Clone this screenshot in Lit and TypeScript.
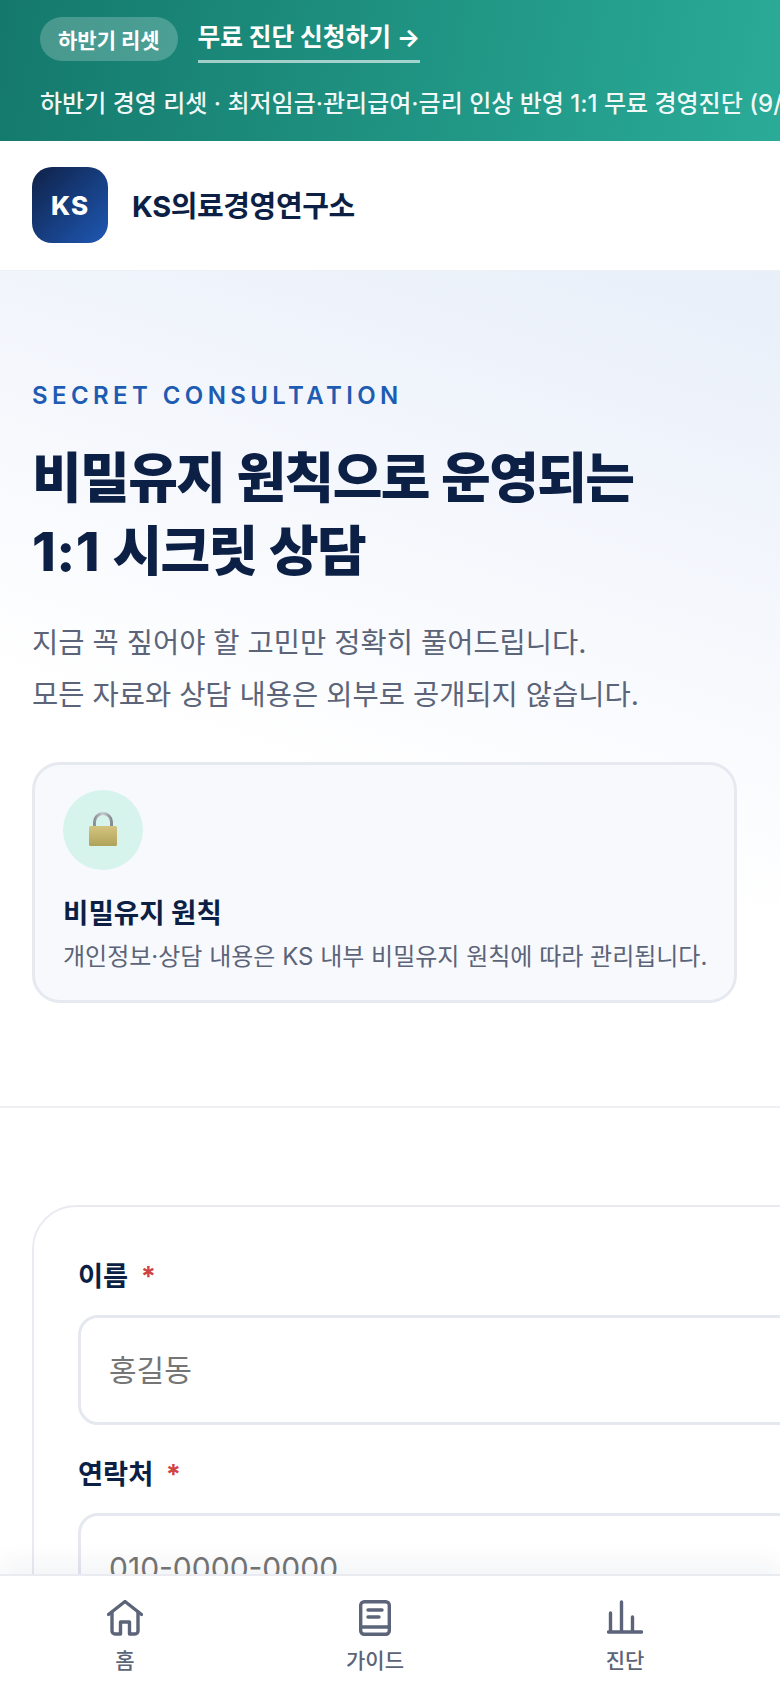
import { LitElement, html, css, svg } from 'lit';
import { customElement } from 'lit/decorators.js';

const navItems = [
  {
    label: '홈',
    icon: svg`<path d="M1.5 14.5 18 1.5l16.5 13" /><path d="M5 12v19a3 3 0 0 0 3 3h5.5V22h9v12H28a3 3 0 0 0 3-3V12" />`,
  },
  {
    label: '가이드',
    icon: svg`<rect x="3.7" y="1.7" width="28.6" height="32.6" rx="3.5" /><path d="M3.7 27h28.6M11 10h14M11 17h11" />`,
  },
  {
    label: '진단',
    icon: svg`<path d="M1.5 32h33M3.5 31V13M14.5 31V2M25.5 31V17" />`,
  },
];

@customElement('app-root')
export class AppRoot extends LitElement {
  static styles = css`
    :host {
      display: block;
      position: relative;
      width: 780px;
      height: 1688px;
      overflow: hidden;
      background: #fff;
      font-family: 'Inter', 'Noto Sans CJK KR', sans-serif;
      color: #0c1f45;
    }

    .promo {
      height: 141px;
      box-sizing: border-box;
      padding: 17px 0 0 40px;
      background: linear-gradient(100deg, #14796c 0%, #2aab98 100%);
      color: #fff;
      white-space: nowrap;
      overflow: hidden;
    }
    .promo__top {
      display: flex;
      align-items: flex-start;
      gap: 20px;
    }
    .promo__pill {
      height: 44px;
      padding: 0 18px;
      display: flex;
      align-items: center;
      border-radius: 22px;
      background: rgba(255, 255, 255, 0.22);
      font-size: 21px;
      font-weight: 700;
    }
    .promo__link {
      height: 43px;
      line-height: 40px;
      border-bottom: 3px solid rgba(255, 255, 255, 0.6);
      font-size: 24.7px;
      font-weight: 700;
    }
    .promo__text {
      margin-top: 24px;
      font-size: 24px;
      font-weight: 500;
      line-height: 34px;
      color: rgba(255, 255, 255, 0.94);
    }

    .brand {
      height: 129px;
      box-sizing: border-box;
      padding: 0 32px 1px;
      display: flex;
      align-items: center;
      gap: 24px;
      background: #fff;
    }
    .brand__logo {
      width: 76px;
      height: 76px;
      border-radius: 20px;
      display: flex;
      align-items: center;
      justify-content: center;
      background: linear-gradient(135deg, #0f2147 0%, #1e58b4 100%);
      color: #fff;
      font-size: 26px;
      font-weight: 800;
      letter-spacing: 1px;
    }
    .brand__name {
      padding-bottom: 3px;
      font-size: 29px;
      font-weight: 700;
      letter-spacing: -0.4px;
    }

    .hero {
      height: 838px;
      box-sizing: border-box;
      padding: 110px 32px 0;
      border-top: 1px solid #edf0f5;
      border-bottom: 2px solid #eef0f4;
      background: linear-gradient(198deg, #e8eff9 0%, #f3f6fc 28%, #fbfcfe 50%, #ffffff 60%);
    }
    .hero__eyebrow {
      font-size: 24px;
      line-height: 30px;
      font-weight: 600;
      letter-spacing: 4.4px;
      color: #1e5cb3;
    }
    .hero__title {
      margin: 31px 0 0;
      font-size: 54px;
      line-height: 73px;
      font-weight: 800;
      letter-spacing: -1.6px;
      word-spacing: 2px;
    }
    .hero__num {
      letter-spacing: 0.5px;
    }
    .hero__sub {
      margin: 29px 0 0;
      font-size: 28.5px;
      line-height: 52px;
      color: #5b6478;
    }
    .notice {
      width: 705px;
      height: 241px;
      margin-top: 41px;
      box-sizing: border-box;
      padding: 25px 28px;
      border: 3px solid #e6e9f0;
      border-radius: 28px;
      background: #f8f9fd;
    }
    .notice__icon {
      width: 80px;
      height: 80px;
      display: flex;
      align-items: center;
      justify-content: center;
      border-radius: 50%;
      background: #d6f3ec;
    }
    .notice__title {
      margin-top: 24px;
      font-size: 27.6px;
      line-height: 38px;
      font-weight: 700;
    }
    .notice__desc {
      margin-top: 7px;
      font-size: 24px;
      line-height: 36px;
      white-space: nowrap;
      color: #5b6478;
    }

    .form-wrap {
      padding: 97px 0 0 32px;
    }
    .form {
      width: 900px;
      height: 600px;
      box-sizing: border-box;
      padding: 50px 44px;
      border: 2px solid #e9ebf0;
      border-radius: 44px;
    }
    .field + .field {
      margin-top: 30px;
    }
    .field__label {
      display: block;
      font-size: 27.3px;
      line-height: 40px;
      font-weight: 700;
    }
    .field__req {
      margin-left: 6px;
      color: #d14343;
    }
    .field__input {
      display: block;
      width: 100%;
      height: 110px;
      margin-top: 18px;
      box-sizing: border-box;
      padding: 0 28px;
      border: 3px solid #e6e8ef;
      border-radius: 20px;
      outline: none;
      background: #fff;
      font: inherit;
      font-size: 30px;
    }
    .field__input::placeholder {
      color: #757575;
      opacity: 1;
    }

    .tabs {
      position: absolute;
      left: 0;
      bottom: 0;
      width: 780px;
      height: 112px;
      display: flex;
      border-top: 2px solid #e9ebf0;
      background: #fff;
      box-shadow: 0 -12px 24px rgba(15, 33, 71, 0.05);
    }
    .tab {
      flex: 0 0 250px;
      display: flex;
      flex-direction: column;
      align-items: center;
      padding-top: 24px;
      color: #5b6478;
      font-size: 21px;
      font-weight: 500;
    }
    .tab svg {
      width: 36px;
      height: 36px;
      fill: none;
      stroke: currentColor;
      stroke-width: 3.4;
      stroke-linecap: round;
      stroke-linejoin: round;
    }
    .tab span {
      margin-top: 8px;
      line-height: 34px;
    }
  `;

  render() {
    return html`
      <div class="promo">
        <div class="promo__top">
          <span class="promo__pill">하반기 리셋</span>
          <span class="promo__link">무료 진단 신청하기 →</span>
        </div>
        <div class="promo__text">하반기 경영 리셋 · 최저임금·관리급여·금리 인상 반영 1:1 무료 경영진단 (9/30까지)</div>
      </div>

      <div class="brand">
        <div class="brand__logo">KS</div>
        <div class="brand__name">KS의료경영연구소</div>
      </div>

      <section class="hero">
        <div class="hero__eyebrow">SECRET CONSULTATION</div>
        <h1 class="hero__title">비밀유지 원칙으로 운영되는<br /><span class="hero__num">1:1</span> 시크릿 상담</h1>
        <p class="hero__sub">지금 꼭 짚어야 할 고민만 정확히 풀어드립니다.<br />모든 자료와 상담 내용은 외부로 공개되지 않습니다.</p>
        <div class="notice">
          <div class="notice__icon">
            <svg width="32" height="38" viewBox="0 0 32 38">
              <defs>
                <linearGradient id="lockBody" x1="0" y1="0" x2="0" y2="1">
                  <stop offset="0" stop-color="#d3c57f" />
                  <stop offset="1" stop-color="#b0a25a" />
                </linearGradient>
                <linearGradient id="lockBar" x1="0" y1="0" x2="1" y2="0">
                  <stop offset="0" stop-color="#8c8f95" />
                  <stop offset="0.5" stop-color="#c6cad1" />
                  <stop offset="1" stop-color="#868a91" />
                </linearGradient>
              </defs>
              <path d="M7.5 16V11a8.5 8.5 0 0 1 17 0v5" fill="none" stroke="url(#lockBar)" stroke-width="3" />
              <rect x="2" y="15" width="28" height="20" rx="1.5" fill="url(#lockBody)" />
            </svg>
          </div>
          <div class="notice__title">비밀유지 원칙</div>
          <div class="notice__desc">개인정보·상담 내용은 KS 내부 비밀유지 원칙에 따라 관리됩니다.</div>
        </div>
      </section>

      <div class="form-wrap">
        <form class="form">
          <div class="field">
            <label class="field__label">이름<span class="field__req"> *</span></label>
            <input class="field__input" placeholder="홍길동" />
          </div>
          <div class="field">
            <label class="field__label">연락처<span class="field__req"> *</span></label>
            <input class="field__input" placeholder="010-0000-0000" />
          </div>
        </form>
      </div>

      <nav class="tabs">
        ${navItems.map(
          (item) => html`
            <div class="tab">
              <svg viewBox="0 0 36 36">${item.icon}</svg>
              <span>${item.label}</span>
            </div>
          `,
        )}
      </nav>
    `;
  }
}
